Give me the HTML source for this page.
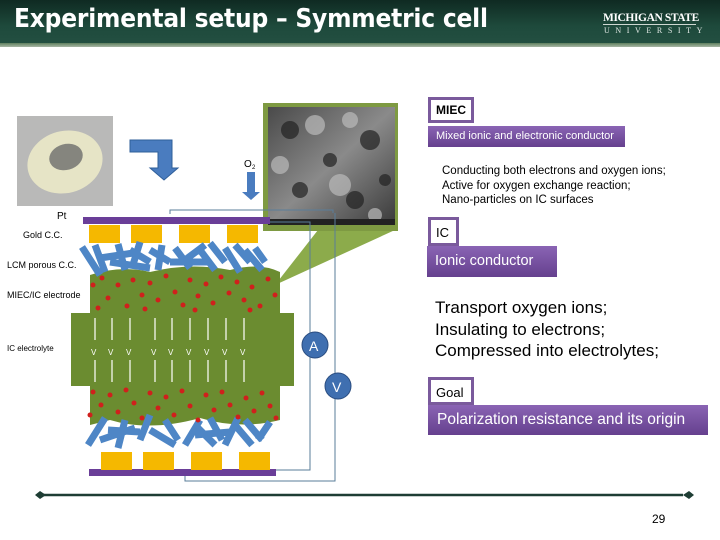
<!DOCTYPE html>
<html><head><meta charset="utf-8"><style>
body{margin:0;width:720px;height:540px;position:relative;background:#fff;overflow:hidden;font-family:"Liberation Sans",sans-serif}
.a{position:absolute}
.hdr{left:0;top:0;width:720px;height:44px;background:linear-gradient(#0f2a22,#1e4a3c 60%,#234f41)}
.strip{left:0;top:43px;width:720px;height:4px;background:linear-gradient(#5e7f5e,#a7b6a5)}
.title{left:14px;top:4px;color:#fff;font:bold 26px "DejaVu Sans Condensed","Liberation Sans",sans-serif;letter-spacing:-0.2px}
.box{background:#fff;border:3px solid #7a5a9c;font-size:12px;font-weight:bold;padding:0 0 0 5px;box-sizing:border-box}
.bar{background:linear-gradient(#8a64b4,#65408e);color:#fff}
.lbl{font-size:9px;color:#000}
</style></head><body>
<div class="a hdr"></div><div class="a strip"></div>
<div class="a title">Experimental setup – Symmetric cell</div>
<div class="a" style="left:603px;top:12px;width:93px;color:#fff;font:bold 11.5px 'Liberation Serif',serif;letter-spacing:-0.4px;border-bottom:1px solid #cfd8d2;white-space:nowrap">MICHIGAN STATE</div>
<div class="a" style="left:604px;top:26px;color:#e0e8e4;font:8px 'Liberation Serif',serif;letter-spacing:5.6px">UNIVERSITY</div>

<svg class="a" style="left:0;top:0" width="720" height="540">
<defs><linearGradient id="g" x1="0" y1="0" x2="1" y2="1"><stop offset="0" stop-color="#4a4a4a"/><stop offset=".5" stop-color="#8a8a8a"/><stop offset="1" stop-color="#3a3a3a"/></linearGradient></defs>
<rect x="17" y="116" width="96" height="90" fill="#b9b9b8"/>
<ellipse cx="65" cy="162" rx="38" ry="31" fill="#e6e4c6" transform="rotate(-15 65 162)"/>
<ellipse cx="66" cy="157" rx="17" ry="13" fill="#85857e" transform="rotate(-15 66 157)"/>
<path d="M130 140 H172 V168 H178 L164 180 L150 168 H158 V152 H130Z" fill="#4a7cbf" stroke="#2f5f9a"/>
<text x="244" y="167" font-size="10" fill="#000">O</text><text x="252" y="169" font-size="6">2</text>
<path d="M247 172 H255 V192 H260 L251 200 L242 192 H247Z" fill="#4a7cbf"/>
<polygon points="318,230 395,230 275,285" fill="#8cab4b"/>
<rect x="263" y="103" width="135" height="128" fill="#7e9a42"/>
<rect x="268" y="107" width="127" height="118" fill="url(#g)"/>
<g fill="#222" opacity=".7"><circle cx="290" cy="130" r="9"/><circle cx="330" cy="160" r="7"/><circle cx="370" cy="140" r="10"/><circle cx="300" cy="190" r="8"/><circle cx="355" cy="200" r="9"/><circle cx="385" cy="180" r="6"/></g>
<g fill="#bbb" opacity=".7"><circle cx="315" cy="125" r="10"/><circle cx="350" cy="120" r="8"/><circle cx="280" cy="165" r="9"/><circle cx="340" cy="185" r="11"/><circle cx="375" cy="215" r="7"/></g>
<rect x="268" y="219" width="127" height="6" fill="#222"/>
<g stroke="#5a7d99" fill="none" stroke-width="1">
<path d="M170 214 V210 H333 V213"/>
<path d="M270 222 H310 V470 H276"/>
<path d="M335 213 V481 H185 V475"/>
</g>
<rect x="83" y="217" width="187" height="7" fill="#6a3e98"/>
<rect x="89" y="469" width="187" height="7" fill="#6a3e98"/>
<g fill="#f5b800">
<rect x="89" y="225" width="31" height="18"/><rect x="131" y="225" width="31" height="18"/><rect x="179" y="225" width="31" height="18"/><rect x="227" y="225" width="31" height="18"/>
<rect x="101" y="452" width="31" height="18"/><rect x="143" y="452" width="31" height="18"/><rect x="191" y="452" width="31" height="18"/><rect x="239" y="452" width="31" height="18"/>
</g>
<path d="M90 275 Q120 265 150 272 Q190 262 230 270 Q260 262 280 272 V313 H90Z" fill="#6b8c30"/>
<path d="M90 386 H280 V420 Q240 430 200 418 Q150 432 110 420 L90 425Z" fill="#6b8c30"/>
<rect x="71" y="313" width="223" height="73" fill="#6b8c30"/>
<g stroke="#4e86c6" stroke-width="7" stroke-linecap="butt">
<path d="M82 247 L100 275M95 245 L105 272M100 258 L140 252M118 244 L125 270M130 250 L150 262M140 242 L132 268M150 250 L170 262M162 245 L158 270M175 248 L190 268M185 260 L205 245M200 250 L215 270M210 243 L225 262M225 248 L240 272M235 245 L250 262M245 250 L262 270M255 248 L265 262M110 262 L150 268M170 262 L210 262"/>
<path d="M88 445 L105 418M100 440 L135 428M118 448 L125 420M140 440 L150 415M150 430 L175 445M165 420 L178 440M185 445 L200 420M198 428 L215 445M210 418 L222 440M225 445 L238 418M235 425 L252 445M245 420 L262 440M258 440 L270 422M108 430 L140 432M195 435 L230 432"/>
</g>
<g fill="#d0201c">
<circle cx="93" cy="285" r="2.5"/><circle cx="102" cy="278" r="2.5"/><circle cx="108" cy="298" r="2.5"/><circle cx="118" cy="285" r="2.5"/><circle cx="127" cy="306" r="2.5"/><circle cx="133" cy="280" r="2.5"/><circle cx="142" cy="295" r="2.5"/><circle cx="150" cy="283" r="2.5"/><circle cx="158" cy="300" r="2.5"/><circle cx="166" cy="276" r="2.5"/><circle cx="175" cy="292" r="2.5"/><circle cx="183" cy="305" r="2.5"/><circle cx="190" cy="280" r="2.5"/><circle cx="198" cy="296" r="2.5"/><circle cx="206" cy="284" r="2.5"/><circle cx="213" cy="303" r="2.5"/><circle cx="221" cy="277" r="2.5"/><circle cx="229" cy="293" r="2.5"/><circle cx="237" cy="282" r="2.5"/><circle cx="244" cy="300" r="2.5"/><circle cx="252" cy="287" r="2.5"/><circle cx="260" cy="306" r="2.5"/><circle cx="268" cy="279" r="2.5"/><circle cx="275" cy="295" r="2.5"/><circle cx="98" cy="308" r="2.5"/><circle cx="145" cy="309" r="2.5"/><circle cx="195" cy="310" r="2.5"/><circle cx="250" cy="310" r="2.5"/>
<circle cx="93" cy="392" r="2.5"/><circle cx="101" cy="405" r="2.5"/><circle cx="110" cy="395" r="2.5"/><circle cx="118" cy="412" r="2.5"/><circle cx="126" cy="390" r="2.5"/><circle cx="134" cy="403" r="2.5"/><circle cx="142" cy="418" r="2.5"/><circle cx="150" cy="393" r="2.5"/><circle cx="158" cy="408" r="2.5"/><circle cx="166" cy="397" r="2.5"/><circle cx="174" cy="415" r="2.5"/><circle cx="182" cy="391" r="2.5"/><circle cx="190" cy="406" r="2.5"/><circle cx="198" cy="420" r="2.5"/><circle cx="206" cy="395" r="2.5"/><circle cx="214" cy="410" r="2.5"/><circle cx="222" cy="392" r="2.5"/><circle cx="230" cy="405" r="2.5"/><circle cx="238" cy="417" r="2.5"/><circle cx="246" cy="398" r="2.5"/><circle cx="254" cy="411" r="2.5"/><circle cx="262" cy="393" r="2.5"/><circle cx="270" cy="406" r="2.5"/><circle cx="276" cy="418" r="2.5"/><circle cx="90" cy="415" r="2.5"/>
</g>
<g stroke="#fff" stroke-width="1.2" fill="#fff">
<path d="M95 340 V318M112 340 V318M130 340 V318M155 340 V318M172 340 V318M190 340 V318M208 340 V318M226 340 V318M244 340 V318"/>
<path d="M95 360 V382M112 360 V382M130 360 V382M155 360 V382M172 360 V382M190 360 V382M208 360 V382M226 360 V382M244 360 V382"/>
</g>
<g fill="#fff" font-size="8"><text x="91" y="355">V</text><text x="108" y="355">V</text><text x="126" y="355">V</text><text x="151" y="355">V</text><text x="168" y="355">V</text><text x="186" y="355">V</text><text x="204" y="355">V</text><text x="222" y="355">V</text><text x="240" y="355">V</text></g>
<circle cx="315" cy="345" r="13" fill="#3f6fb0" stroke="#2a4d80"/><text x="309" y="351" fill="#fff" font-size="14">A</text>
<circle cx="338" cy="386" r="13" fill="#3f6fb0" stroke="#2a4d80"/><text x="332" y="392" fill="#fff" font-size="14">V</text>
<line x1="40" y1="495" x2="683" y2="495" stroke="#1e3d34" stroke-width="2.5"/>
<path d="M35 495 L40 491 L46 495 L40 499Z M683 495 L689 491 L694 495 L689 499Z" fill="#1e3d34"/>
</svg>

<div class="a lbl" style="left:57px;top:211px;font-size:10px">Pt</div>
<div class="a lbl" style="left:23px;top:230px">Gold C.C.</div>
<div class="a lbl" style="left:7px;top:260px">LCM porous C.C.</div>
<div class="a lbl" style="left:7px;top:290px">MIEC/IC electrode</div>
<div class="a lbl" style="left:7px;top:344px;font-size:8px">IC electrolyte</div>

<div class="a box" style="left:428px;top:97px;width:46px;height:26px;line-height:20px">MIEC</div>
<div class="a bar" style="left:428px;top:126px;width:197px;height:21px;font-size:11px;line-height:21px;padding-left:8px;box-sizing:border-box">Mixed ionic and electronic conductor</div>
<div class="a" style="left:442px;top:164px;font-size:11.5px;line-height:14.5px">Conducting both electrons and oxygen ions;<br>Active for oxygen exchange reaction;<br>Nano-particles on IC surfaces</div>

<div class="a box" style="left:428px;top:217px;width:31px;height:29px;line-height:26px;font-weight:normal;font-size:13px">IC</div>
<div class="a bar" style="left:427px;top:246px;width:130px;height:31px;font-size:14.5px;line-height:31px;padding-left:8px;box-sizing:border-box">Ionic conductor</div>
<div class="a" style="left:435px;top:297px;font-size:17px;line-height:21.5px">Transport oxygen ions;<br>Insulating to electrons;<br>Compressed into electrolytes;</div>

<div class="a box" style="left:428px;top:377px;width:46px;height:28px;line-height:25px;font-weight:normal;font-size:13px">Goal</div>
<div class="a bar" style="left:428px;top:405px;width:280px;height:30px;font-size:15.5px;line-height:30px;padding-left:9px;box-sizing:border-box">Polarization resistance and its origin</div>

<div class="a" style="left:652px;top:512px;font-size:12px">29</div>
</body></html>
